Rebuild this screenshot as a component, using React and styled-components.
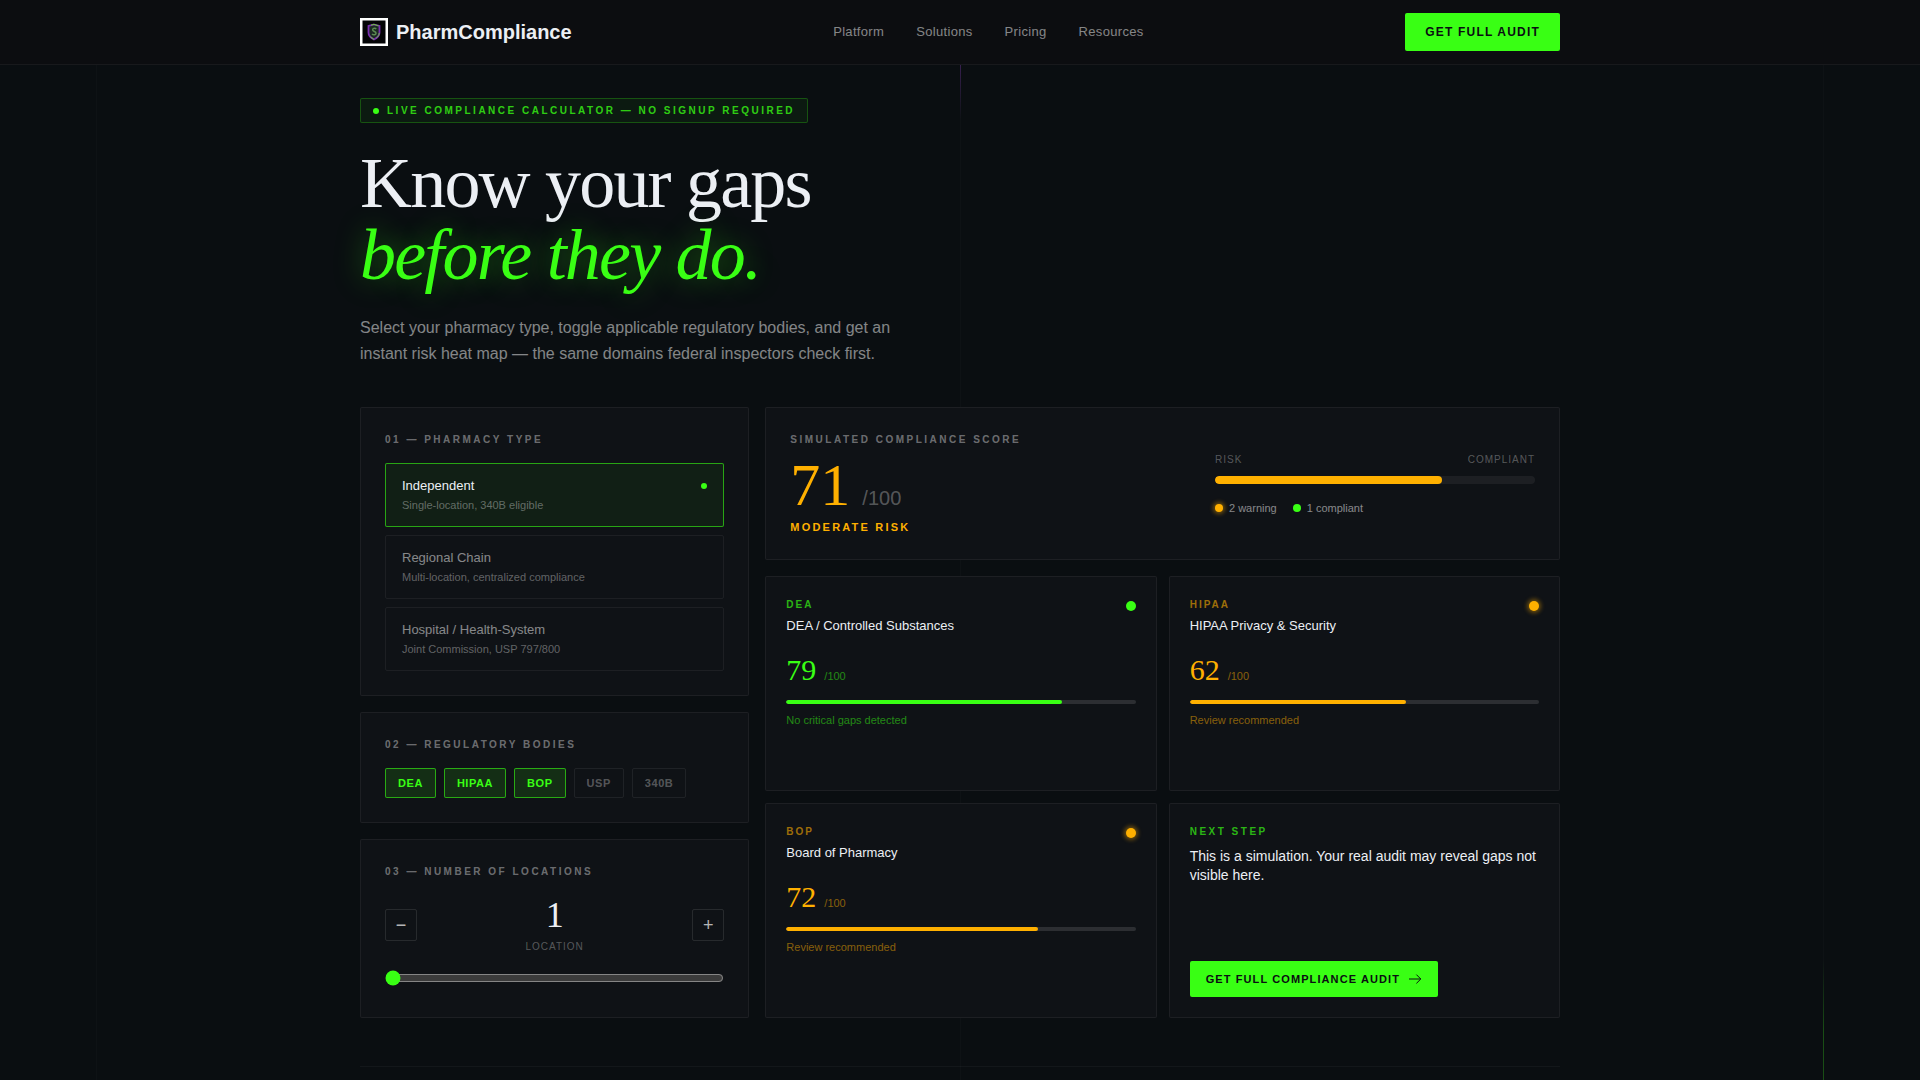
import {useState} from 'react';
import styled, {createGlobalStyle} from 'styled-components';

const GREEN = '#39ff14';
const AMBER = '#ffb000';

const tones = {
  green: {main: GREEN, label: 'rgba(57, 255, 20, 0.7)', dim: 'rgba(57, 255, 20, 0.5)', glow: 'none'},
  amber: {main: AMBER, label: 'rgba(255, 176, 0, 0.6)', dim: 'rgba(255, 176, 0, 0.5)', glow: '0 0 4px 2px rgba(255, 176, 0, 0.4)'},
}

const GlobalStyle = createGlobalStyle`
  *, *::before, *::after {
    box-sizing: border-box;
  }

  body {
    margin: 0;
    background: #0a0e11;
    color: #eceff4;
    font-family: 'Liberation Sans', Arial, sans-serif;
    color-scheme: dark;
  }

  h1, h2, h3, p {
    margin: 0;
    font-weight: 400;
  }

  button {
    font-family: inherit;
    cursor: pointer;
  }
`

const Page = styled.div`
  position: relative;
  min-height: 100vh;
`

/* decorative beams behind the content */
const Beam = styled.div`
  position: absolute;
  top: 0;
  bottom: 0;
  left: ${({$left}) => $left};
  width: 1px;
  background: rgba(255, 255, 255, 0.02);

  &::after {
    content: '';
    position: absolute;
    left: 0;
    width: 1px;
    height: 120px;
    ${({$glow}) => $glow === 'top' && 'top: 0; background: linear-gradient(to bottom, rgba(140, 60, 200, 0.7), transparent);'}
    ${({$glow}) => $glow === 'bottom' && 'bottom: 0; background: linear-gradient(to bottom, transparent, rgba(57, 255, 20, 0.25) 60%);'}
  }
`

const Container = styled.div`
  width: 100%;
  max-width: 1200px;
  margin: 0 auto;
`

const Header = styled.header`
  position: relative;
  background: #0c0d10;
  border-bottom: 1px solid rgba(255, 255, 255, 0.05);
`

const HeaderRow = styled(Container)`
  display: flex;
  align-items: center;
  justify-content: space-between;
  height: 64px;
`

const Brand = styled.a`
  display: flex;
  align-items: center;
  gap: 8px;
  color: #eceff4;
  font-size: 20px;
  font-weight: 700;
  text-decoration: none;
`

const Nav = styled.nav`
  display: flex;
  gap: 32px;

  a {
    color: rgba(255, 255, 255, 0.5);
    font-size: 13px;
    line-height: 20px;
    letter-spacing: 0.025em;
    text-decoration: none;
  }
`

const PrimaryButton = styled.button`
  display: inline-flex;
  align-items: center;
  align-self: flex-start;
  gap: 8px;
  padding: 10px ${({$small}) => $small ? '16px' : '20px'};
  border: none;
  border-radius: 2px;
  background: ${GREEN};
  color: #0a0e11;
  font-size: ${({$small}) => $small ? '11px' : '12px'};
  line-height: ${({$small}) => $small ? '16px' : '18px'};
  font-weight: 700;
  letter-spacing: 0.1em;
  text-transform: uppercase;
`

const HeaderButton = styled(PrimaryButton)`
  align-self: center;
`

const Main = styled(Container).attrs({as: 'main'})`
  position: relative;
  padding-top: 33px;
`

const Hero = styled.section`
  display: flex;
  flex-direction: column;
  align-items: flex-start;
  gap: 24px;
  margin-bottom: 40px;

  h1 {
    color: #eceff4;
    font-family: 'Liberation Serif', 'Times New Roman', serif;
    font-size: 72px;
    line-height: 72px;
    letter-spacing: -0.025em;
  }

  em {
    display: block;
    color: ${GREEN};
    text-shadow: 0 0 30px rgba(57, 255, 20, 0.4);
  }

  p {
    max-width: 560px;
    color: rgba(255, 255, 255, 0.5);
    font-size: 16px;
    line-height: 26px;
  }
`

const Badge = styled.div`
  display: flex;
  align-items: center;
  gap: 8px;
  padding: 4px 12px;
  border: 1px solid rgba(57, 255, 20, 0.25);
  border-radius: 2px;
  background: rgba(57, 255, 20, 0.05);
  color: rgba(57, 255, 20, 0.8);
  font-size: 10px;
  line-height: 15px;
  font-weight: 700;
  letter-spacing: 0.25em;
  text-transform: uppercase;
`

const Dot = styled.span`
  flex: none;
  width: ${({$size}) => $size}px;
  height: ${({$size}) => $size}px;
  border-radius: 50%;
  background: ${({$tone}) => tones[$tone].main};
  box-shadow: ${({$tone}) => tones[$tone].glow};
`

const Grid = styled.div`
  display: grid;
  grid-template-columns: repeat(12, 1fr);
  gap: 16px;
`

const Column = styled.div`
  grid-column: span ${({$span}) => $span};
  display: flex;
  flex-direction: column;
  gap: 16px;
`

const Card = styled.section`
  padding: 24px;
  border: 1px solid rgba(255, 255, 255, 0.06);
  border-radius: 2px;
  background: #0f1216;
`

const Label = styled.h2`
  display: block;
  color: rgba(255, 255, 255, 0.4);
  font-size: 10px;
  line-height: 15px;
  font-weight: 700;
  letter-spacing: 0.25em;
  text-transform: uppercase;
`

const Options = styled.div`
  display: flex;
  flex-direction: column;
  gap: 8px;
  margin-top: 16px;
`

const Option = styled.button`
  display: flex;
  flex-direction: column;
  gap: 1px;
  padding: 12px 16px;
  border: 1px solid ${({$active}) => $active ? 'rgba(57, 255, 20, 0.6)' : 'rgba(255, 255, 255, 0.06)'};
  border-radius: 2px;
  background: ${({$active}) => $active ? 'rgba(57, 255, 20, 0.06)' : 'transparent'};
  text-align: left;
`

const OptionTitle = styled.span`
  display: flex;
  align-items: center;
  justify-content: space-between;
  width: 100%;
  color: ${({$active}) => $active ? '#eceff4' : 'rgba(255, 255, 255, 0.5)'};
  font-size: 13px;
  line-height: 20px;
`

const OptionText = styled.span`
  color: rgba(255, 255, 255, 0.35);
  font-size: 11px;
  line-height: 17px;
`

const Chips = styled.div`
  display: flex;
  flex-wrap: wrap;
  gap: 8px;
  margin-top: 16px;
`

const Chip = styled.button`
  padding: 6px 12px;
  border: 1px solid ${({$active}) => $active ? 'rgba(57, 255, 20, 0.6)' : 'rgba(255, 255, 255, 0.07)'};
  border-radius: 2px;
  background: ${({$active}) => $active ? 'rgba(57, 255, 20, 0.12)' : 'transparent'};
  color: ${({$active}) => $active ? GREEN : 'rgba(255, 255, 255, 0.3)'};
  font-size: 11px;
  line-height: 16px;
  font-weight: 700;
  letter-spacing: 0.05em;
`

const Counter = styled.div`
  display: flex;
  align-items: center;
  justify-content: space-between;
  margin-top: 16px;
`

const StepButton = styled.button`
  display: flex;
  align-items: center;
  justify-content: center;
  width: 32px;
  height: 32px;
  padding: 0;
  border: 1px solid rgba(255, 255, 255, 0.1);
  border-radius: 2px;
  background: transparent;
  color: rgba(255, 255, 255, 0.7);
  font-size: 18px;
  line-height: 28px;
`

const CounterValue = styled.div`
  display: flex;
  flex-direction: column;
  align-items: center;
  gap: 4px;

  output {
    font-family: 'Liberation Serif', 'Times New Roman', serif;
    font-size: 36px;
    line-height: 40px;
  }
`

const Caption = styled.span`
  color: rgba(255, 255, 255, 0.3);
  font-size: 10px;
  line-height: 16px;
  letter-spacing: 0.1em;
  text-transform: uppercase;
`

const Slider = styled.input`
  display: block;
  width: 100%;
  height: 16px;
  margin: 15px 0 7px;
  accent-color: ${GREEN};
`

const ScoreCard = styled(Card)`
  display: flex;
  align-items: center;
  justify-content: space-between;
`

const BigScore = styled.div`
  display: flex;
  align-items: baseline;
  gap: 12px;
  margin: 8px 0 4px;
  color: rgba(255, 255, 255, 0.3);
  font-size: 20px;
  line-height: 24px;

  strong {
    color: ${AMBER};
    font-family: 'Liberation Serif', 'Times New Roman', serif;
    font-size: 60px;
    line-height: 60px;
    font-weight: 400;
  }
`

const Verdict = styled.p`
  color: ${AMBER};
  font-size: 11px;
  line-height: 16px;
  letter-spacing: 0.2em;
  text-transform: uppercase;

  && {
    font-weight: 700;
  }
`

const Meter = styled.div`
  width: 320px;
`

const MeterEnds = styled.div`
  display: flex;
  justify-content: space-between;
  margin-bottom: 8px;
`

const Bar = styled.div`
  height: ${({$height}) => $height}px;
  border-radius: 4px;
  background: rgba(255, 255, 255, ${({$height}) => $height > 4 ? 0.06 : 0.12});
  overflow: hidden;

  div {
    height: 100%;
    border-radius: 4px;
    background: ${({$tone}) => tones[$tone].main};
  }
`

const Legend = styled.div`
  display: flex;
  gap: 16px;
  margin-top: 16px;
  color: rgba(255, 255, 255, 0.5);
  font-size: 11px;
  line-height: 16px;

  span {
    display: flex;
    align-items: center;
    gap: 6px;
  }
`

const DomainGrid = styled.div`
  flex: 1;
  display: grid;
  grid-template-columns: 1fr 1fr;
  grid-auto-rows: 1fr;
  gap: 12px;
`

const DomainCard = styled(Card)`
  display: flex;
  flex-direction: column;
  padding: 20px;
`

const DomainHead = styled.div`
  display: flex;
  justify-content: space-between;

  > span {
    margin-top: 4px;
  }
`

const DomainLabel = styled(Label)`
  color: ${({$tone}) => tones[$tone].label};
  letter-spacing: ${({$wide}) => $wide ? '0.25em' : '0.2em'};
`

const DomainTitle = styled.h3`
  margin-top: 4px;
  color: #eceff4;
  font-size: 13px;
  line-height: 20px;
`

const DomainScore = styled.div`
  display: flex;
  align-items: baseline;
  gap: 8px;
  margin: 16px 0 12px;
  color: ${({$tone}) => tones[$tone].dim};
  font-size: 11px;
  line-height: 16px;

  strong {
    color: ${({$tone}) => tones[$tone].main};
    font-family: 'Liberation Serif', 'Times New Roman', serif;
    font-size: 30px;
    line-height: 36px;
    font-weight: 400;
  }
`

const DomainNote = styled.p`
  margin-top: 8px;
  color: ${({$tone}) => tones[$tone].dim};
  font-size: 11px;
  line-height: 16px;
`

const NextCard = styled(DomainCard)`
  justify-content: space-between;

  p {
    margin-top: 8px;
    color: #eceff4;
    font-size: 14px;
    line-height: 19px;
  }
`

const Footer = styled.footer`
  margin-top: 48px;
  border-top: 1px solid rgba(255, 255, 255, 0.04);
`

const LogoMark = () => (
  <svg width="28" height="28" viewBox="0 0 28 28" aria-hidden="true">
    <rect width="28" height="28" fill="#fff" />
    <rect x="2.5" y="2.5" width="23" height="23" fill="#040406" />
    <path d="M14 6.5l5.5 1.5v6.5c0 3-2.3 5.4-5.5 7-3.2-1.6-5.5-4-5.5-7V8z" fill="#1b2a22" stroke="#7a2fb0" strokeWidth="1.8" />
    <path d="M11 7.2l3-.8 4.6 1.4M10.4 18.8l3.6 2.7M19.3 15c-.3 2-1.4 3.6-3 4.8" fill="none" stroke="#6cc23c" strokeWidth="1" />
    <path d="M16.3 10.8c-1.8-1.2-4-.4-3.6 1.2.4 1.6 3.4 1.4 3.3 3.2-.1 1.6-2.4 2-4 .8" fill="none" stroke="#5c8a52" strokeWidth="1.5" />
  </svg>
)

const ArrowIcon = () => (
  <svg width="14" height="14" viewBox="0 0 14 14" fill="none" stroke="currentColor" strokeWidth="1" aria-hidden="true">
    <path d="M1 7h11.6M8.4 2.6L12.8 7l-4.4 4.4" />
  </svg>
)

const pharmacyTypes = [
  {name: 'Independent', text: 'Single-location, 340B eligible'},
  {name: 'Regional Chain', text: 'Multi-location, centralized compliance'},
  {name: 'Hospital / Health-System', text: 'Joint Commission, USP 797/800'},
]

const bodies = ['DEA', 'HIPAA', 'BOP', 'USP', '340B'];

const domains = [
  {id: 'DEA', title: 'DEA / Controlled Substances', score: 79, tone: 'green', note: 'No critical gaps detected'},
  {id: 'HIPAA', title: 'HIPAA Privacy & Security', score: 62, tone: 'amber', note: 'Review recommended'},
  {id: 'BOP', title: 'Board of Pharmacy', score: 72, tone: 'amber', note: 'Review recommended'},
]

const App = () => {
  const [type, setType] = useState('Independent');
  const [active, setActive] = useState(['DEA', 'HIPAA', 'BOP']);
  const [locations, setLocations] = useState(1);
  const score = 71;

  const toggleBody = (id) => {
    setActive(active.includes(id) ? active.filter(item => item !== id) : [...active, id]);
  }

  return (
    <Page>
      <GlobalStyle />
      <Beam $left="5%" />
      <Beam $left="50%" $glow="top" />
      <Beam $left="calc(95% - 1px)" $glow="bottom" />
      <Header>
        <HeaderRow>
          <Brand href="#">
            <LogoMark />
            PharmCompliance
          </Brand>
          <Nav>
            <a href="#platform">Platform</a>
            <a href="#solutions">Solutions</a>
            <a href="#pricing">Pricing</a>
            <a href="#resources">Resources</a>
          </Nav>
          <HeaderButton type="button">Get full audit</HeaderButton>
        </HeaderRow>
      </Header>
      <Main>
        <Hero>
          <Badge>
            <Dot $size={6} $tone="green" />
            Live compliance calculator — no signup required
          </Badge>
          <h1>
            Know your gaps
            <em>before they do.</em>
          </h1>
          <p>
            Select your pharmacy type, toggle applicable regulatory bodies, and get an
            instant risk heat map — the same domains federal inspectors check first.
          </p>
        </Hero>
        <Grid>
          <Column $span={4}>
            <Card>
              <Label>01 — Pharmacy type</Label>
              <Options>
                {pharmacyTypes.map(({name, text}) => (
                  <Option
                    key={name}
                    type="button"
                    aria-pressed={type === name}
                    $active={type === name}
                    onClick={() => setType(name)}
                  >
                    <OptionTitle $active={type === name}>
                      {name}
                      {type === name && <Dot $size={6} $tone="green" />}
                    </OptionTitle>
                    <OptionText>{text}</OptionText>
                  </Option>
                ))}
              </Options>
            </Card>
            <Card>
              <Label>02 — Regulatory bodies</Label>
              <Chips>
                {bodies.map(id => (
                  <Chip
                    key={id}
                    type="button"
                    aria-pressed={active.includes(id)}
                    $active={active.includes(id)}
                    onClick={() => toggleBody(id)}
                  >
                    {id}
                  </Chip>
                ))}
              </Chips>
            </Card>
            <Card>
              <Label as="label" htmlFor="locations">03 — Number of locations</Label>
              <Counter>
                <StepButton type="button" aria-label="Fewer locations" onClick={() => setLocations(Math.max(1, locations - 1))}>−</StepButton>
                <CounterValue>
                  <output htmlFor="locations">{locations}</output>
                  <Caption>{locations === 1 ? 'Location' : 'Locations'}</Caption>
                </CounterValue>
                <StepButton type="button" aria-label="More locations" onClick={() => setLocations(Math.min(50, locations + 1))}>+</StepButton>
              </Counter>
              <Slider
                id="locations"
                type="range"
                min="1"
                max="50"
                value={locations}
                onChange={(e) => setLocations(Number(e.target.value))}
              />
            </Card>
          </Column>
          <Column $span={8}>
            <ScoreCard>
              <div>
                <Label>Simulated compliance score</Label>
                <BigScore>
                  <strong>{score}</strong>
                  <span>/100</span>
                </BigScore>
                <Verdict>Moderate risk</Verdict>
              </div>
              <Meter>
                <MeterEnds>
                  <Caption>Risk</Caption>
                  <Caption>Compliant</Caption>
                </MeterEnds>
                <Bar $height={8} $tone="amber">
                  <div style={{width: `${score}%`}} />
                </Bar>
                <Legend>
                  <span><Dot $size={8} $tone="amber" />2 warning</span>
                  <span><Dot $size={8} $tone="green" />1 compliant</span>
                </Legend>
              </Meter>
            </ScoreCard>
            <DomainGrid>
              {domains.filter(({id}) => active.includes(id)).map(({id, title, score, tone, note}) => (
                <DomainCard key={id}>
                  <DomainHead>
                    <div>
                      <DomainLabel $tone={tone}>{id}</DomainLabel>
                      <DomainTitle>{title}</DomainTitle>
                    </div>
                    <Dot $size={10} $tone={tone} />
                  </DomainHead>
                  <DomainScore $tone={tone}>
                    <strong>{score}</strong>
                    <span>/100</span>
                  </DomainScore>
                  <Bar $height={4} $tone={tone}>
                    <div style={{width: `${score}%`}} />
                  </Bar>
                  <DomainNote $tone={tone}>{note}</DomainNote>
                </DomainCard>
              ))}
              <NextCard>
                <div>
                  <DomainLabel $tone="green" $wide>Next step</DomainLabel>
                  <p>This is a simulation. Your real audit may reveal gaps not visible here.</p>
                </div>
                <PrimaryButton type="button" $small>
                  Get full compliance audit
                  <ArrowIcon />
                </PrimaryButton>
              </NextCard>
            </DomainGrid>
          </Column>
        </Grid>
        <Footer />
      </Main>
    </Page>
  )
}

export default App;
